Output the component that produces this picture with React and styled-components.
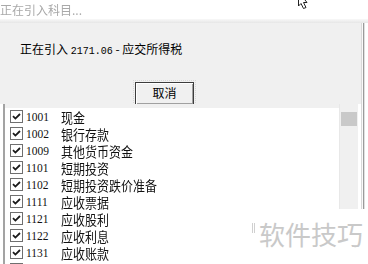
import React from "react";
import styled, { createGlobalStyle } from "styled-components";

const Global = createGlobalStyle`
  html, body { margin: 0; padding: 0; background: #fff; }
  body { width: 368px; height: 264px; overflow: hidden; }
  #root { width: 368px; height: 264px; }
`;

const Screen = styled.div`
  position: relative;
  width: 368px;
  height: 264px;
  display: flex;
  flex-direction: column;
  background: #fff;
  overflow: hidden;
  font-family: "Noto Sans CJK SC", sans-serif;
`;

const TitleBar = styled.div`
  height: 19px;
  flex: none;
  background: #fff;
  display: flex;
  align-items: center;
  padding-left: 0;
  font-size: 12px;
  color: #a9a9a9;
  line-height: 1;
  filter: blur(0.3px);
`;

const Divider = styled.div`
  height: 4px;
  flex: none;
  background: linear-gradient(#f8f8f8, #e6e6e6);
`;

const Body = styled.div`
  flex: 1;
  display: flex;
  min-height: 0;
`;

const Main = styled.div`
  flex: 1;
  display: flex;
  flex-direction: column;
  min-width: 0;
`;

const Frame = styled.div`
  width: 7px;
  flex: none;
  display: flex;
  background: #fff;
`;

const FrameLine = styled.div`
  width: ${(p) => p.$w}px;
  background: ${(p) => p.$c};
`;

const Dialog = styled.div`
  height: 81px;
  flex: none;
  background: #f0f0f0;
  display: flex;
  flex-direction: column;
`;

const Message = styled.div`
  margin: 19px 0 0 20px;
  font-size: 12px;
  line-height: 14px;
  color: #000;
  white-space: pre;
`;

const Mono = styled.span`
  font-family: "Liberation Mono", monospace;
  font-size: 10px;
`;

const ButtonRow = styled.div`
  margin-top: 20px;
  padding-left: 135px;
`;

const Button = styled.button`
  width: 59px;
  height: 23px;
  padding: 0;
  background: #f0f0f0;
  border: 1px solid #3c3c3c;
  box-shadow: inset 1px 1px 0 #fff, inset -1px -1px 0 #a0a0a0;
  font-family: "Noto Sans CJK SC", sans-serif;
  font-size: 12px;
  color: #000;
  line-height: 1;
  outline: 1px dotted #d8d8d8;
  outline-offset: 1px;
`;

const List = styled.div`
  flex: 1;
  display: flex;
  margin-left: 3px;
  border-left: 2px solid #a3a3a3;
  background: #fff;
  min-height: 0;
`;

const Rows = styled.div`
  flex: 1;
  border-top: 4px solid #f0f0f0;
  padding-left: 5px;
  display: flex;
  flex-direction: column;
`;

const Row = styled.div`
  height: 17px;
  flex: none;
  display: flex;
  align-items: center;
`;

const Check = styled.span`
  width: 11px;
  height: 11px;
  flex: none;
  border: 1px solid #6f6f6f;
  background: #fff;
  display: flex;
  align-items: center;
  justify-content: center;
`;

const Code = styled.span`
  width: 35px;
  margin-left: 3px;
  flex: none;
  font-family: "Liberation Serif", serif;
  font-size: 11.5px;
  color: #111;
`;

const Name = styled.span`
  font-size: 12px;
  color: #111;
  transform: scaleY(1.1);
`;

const ScrollBar = styled.div`
  width: 18px;
  flex: none;
  margin-right: 3px;
  background: #f0f0f0;
  border-left: 1px solid #e8e8e8;
  display: flex;
  flex-direction: column;
  align-items: center;
  padding-top: 8px;
`;

const Thumb = styled.div`
  width: 16px;
  height: 14px;
  background: #c9c9c9;
`;

const Watermark = styled.div`
  position: absolute;
  left: 247px;
  top: 209px;
  width: 121px;
  height: 55px;
  background: #fff;
  display: flex;
  align-items: flex-start;
  padding-top: 10px;
  box-sizing: border-box;
  padding-left: 5px;
  font-size: 26px;
  line-height: 30px;
  color: #c9c9c9;
  letter-spacing: 0;
`;

const Tick = styled.span`
  width: 3px;
  height: 10px;
  margin: 4px 4px 0 0;
  border-left: 1px solid #d0d0d0;
  border-right: 1px solid #d0d0d0;
  box-sizing: border-box;
`;

const Cursor = styled.svg`
  position: absolute;
  left: 297px;
  top: 0;
`;

const items = [
  ["1001", "现金"],
  ["1002", "银行存款"],
  ["1009", "其他货币资金"],
  ["1101", "短期投资"],
  ["1102", "短期投资跌价准备"],
  ["1111", "应收票据"],
  ["1121", "应收股利"],
  ["1122", "应收利息"],
  ["1131", "应收账款"],
  ["1133", "其他应收款"],
];

const CheckMark = () => (
  <svg width="9" height="9" viewBox="0 0 9 9">
    <path d="M1 4.2 L3.4 6.6 L8 2" fill="none" stroke="#1a1a1a" strokeWidth="1.8" />
  </svg>
);

export default function App() {
  return (
    <>
      <Global />
      <Screen>
        <TitleBar>正在引入科目...</TitleBar>
        <Divider />
        <Body>
          <Main>
            <Dialog>
              <Message>
                正在引入 <Mono>2171.06</Mono> - 应交所得税
              </Message>
              <ButtonRow>
                <Button>取消</Button>
              </ButtonRow>
            </Dialog>
            <List>
              <Rows>
                {items.map(([code, name]) => (
                  <Row key={code}>
                    <Check>
                      <CheckMark />
                    </Check>
                    <Code>{code}</Code>
                    <Name>{name}</Name>
                  </Row>
                ))}
              </Rows>
              <ScrollBar>
                <Thumb />
              </ScrollBar>
            </List>
          </Main>
          <Frame>
            <FrameLine $w={1} $c="#d9d9d9" />
            <FrameLine $w={1} $c="#fafafa" />
            <FrameLine $w={1} $c="#9a9a9a" />
            <FrameLine $w={1} $c="#e0e0e0" />
          </Frame>
        </Body>
        <Watermark>
          <Tick />
          软件技巧
        </Watermark>
        <Cursor width="15" height="9" viewBox="0 0 15 9">
          <path d="M1.5 0 L1.5 6 L4 3.5 L6.5 8.5 L9 7.5 L6.5 2.5 L10 2.5 L8 0" fill="#fff" stroke="#222" strokeWidth="1" />
        </Cursor>
      </Screen>
    </>
  );
}
